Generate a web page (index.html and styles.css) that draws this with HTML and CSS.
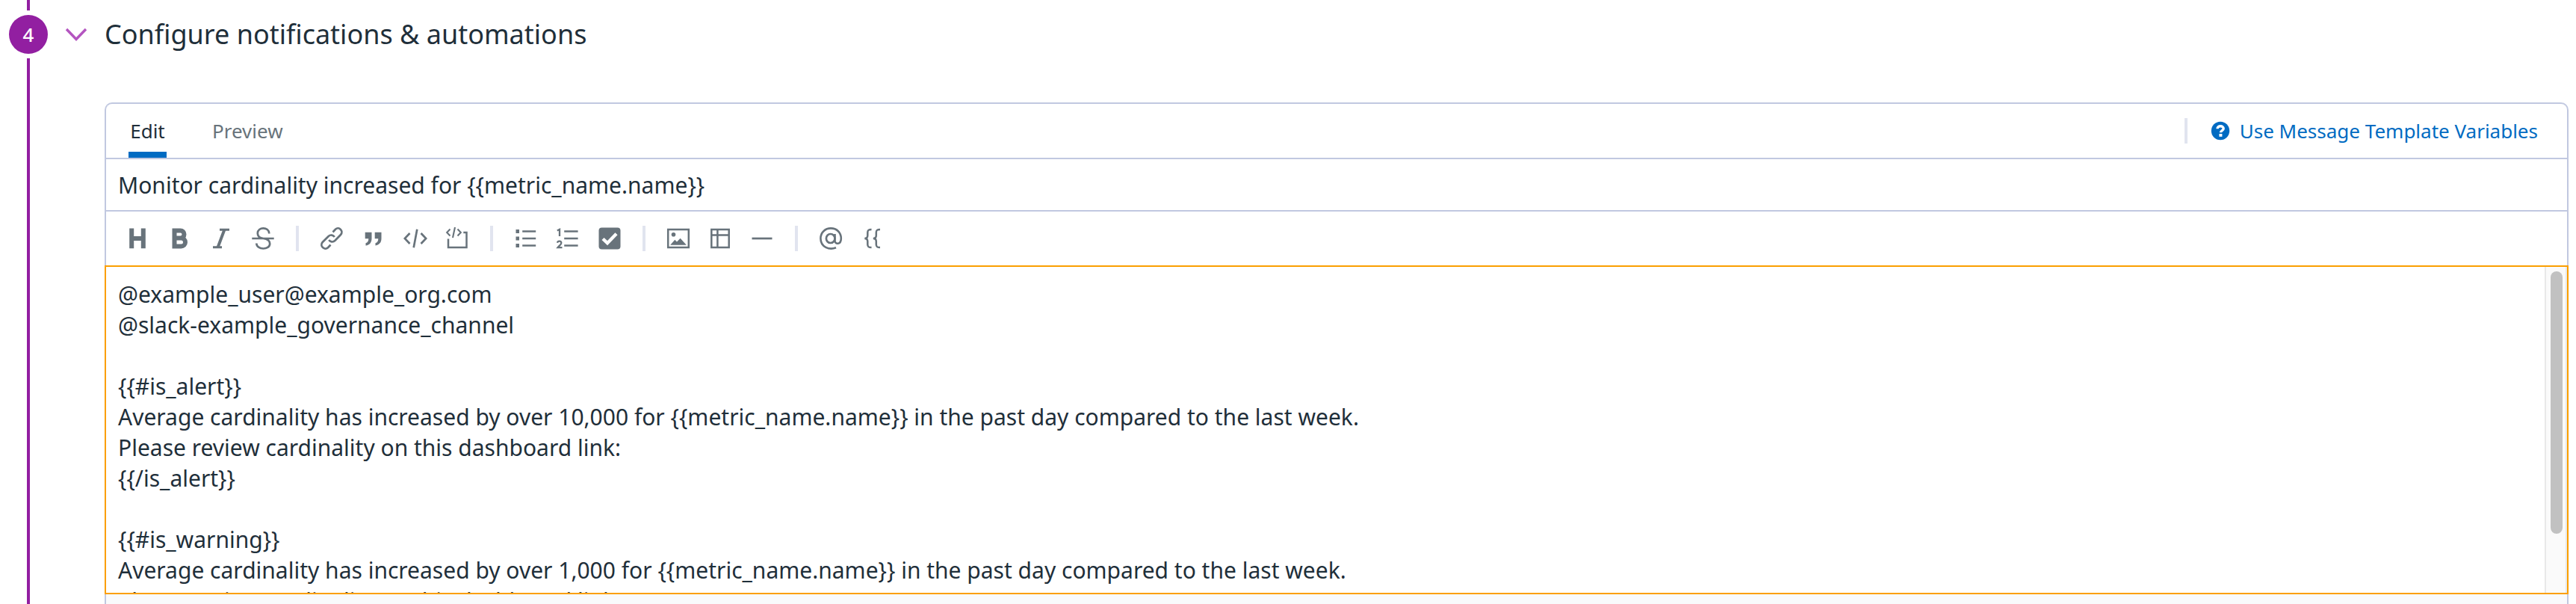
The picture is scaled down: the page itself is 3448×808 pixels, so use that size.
FILE: index.html
```html
<!DOCTYPE html>
<html lang="en">
<head>
<meta charset="utf-8">
<title>Configure notifications &amp; automations</title>
<link rel="stylesheet" href="styles.css">
</head>
<body>
<section class="step">
  <div class="rail">
    <span class="rail-line rail-line-top"></span>
    <span class="step-number">4</span>
    <span class="rail-line rail-line-rest"></span>
  </div>
  <div class="chevron">
    <svg width="32" height="20" viewBox="0 0 32 20"><path d="M3 3 L16 16.5 L29 3" fill="none" stroke="#b455c0" stroke-width="3.4"/></svg>
  </div>
  <div class="content">
    <h2 class="heading">Configure notifications &amp; automations</h2>
    <div class="editor">
      <div class="tabs">
        <div class="tab tab-active">Edit</div>
        <div class="tab tab-preview">Preview</div>
        <div class="help">
          <span class="divider"></span>
          <svg class="help-icon" width="26" height="26" viewBox="0 0 26 26"><circle cx="13" cy="13" r="12.2" fill="#006bc2"/><path d="M9 10.2 C9 5.8 17.2 5.6 17.2 10 C17.2 12.6 13.4 12.6 13.4 15.2" fill="none" stroke="#fff" stroke-width="3.4"/><rect x="11.4" y="17" width="4" height="3.8" fill="#fff"/></svg>
          <span class="help-text">Use Message Template Variables</span>
        </div>
      </div>
      <div class="subject">Monitor cardinality increased for {{metric_name.name}}</div>
      <div class="toolbar">
        <div class="group">
          <svg class="icon" viewBox="0 0 32 32"><path d="M8.2 2.5 V29.3 M23.8 2.5 V29.3 M8 16 H24" stroke-width="6"/></svg>
          <svg class="icon" viewBox="0 0 32 32"><path d="M9.500 5.500 H17.500 A5 5 0 0 1 17.500 15.500 H9.500 Z M9.500 15.500 H18.500 A5.400 5.400 0 0 1 18.500 26.500 H9.500 Z" stroke-width="6"/></svg>
          <svg class="icon" viewBox="0 0 32 32"><path d="M14 4.200 H27 M5 27.800 H17" stroke-width="3"/><path d="M20.500 4 L11.500 28" stroke-width="4"/></svg>
          <svg class="icon" viewBox="0 0 32 32"><path d="M1.300 16 H30.700 M24.300 9.500 C24 0 8.800 0 8.800 9 C8.800 13.500 12 15.500 16.500 16 C22 16.800 25.200 19 25.200 23 C25.200 32 7.300 31.500 7.300 22.500" stroke-width="2.700"/></svg>
        </div>
        <span class="divider"></span>
        <div class="group">
          <svg class="icon" viewBox="0 0 32 32"><g stroke-width="2.700"><path d="M17.500 7.500 L21 3.800 C25.500 -0.500 32.500 6 28 11 L20.500 18.800 C17.500 21.700 14 20.500 12.200 18"/><path d="M14.500 24.500 L11 28.200 C6.500 32.500 -0.700 26 3.700 21 L11.500 13.200 C14.500 10.300 18 11.500 19.800 14"/></g></svg>
          <svg class="icon" viewBox="0 0 32 32"><path class="solid" d="M4.700 7.700 H13.500 V16 C13.500 21.500 10.500 25 5.500 25.500 V22.300 C8 21.600 9.300 19.500 9.300 16.300 H4.700 Z M17.700 7.700 H26.500 V16 C26.500 21.500 23.500 25 18.500 25.500 V22.300 C21 21.600 22.300 19.500 22.300 16.300 H17.700 Z"/></svg>
          <svg class="icon" viewBox="0 0 32 32"><path d="M8.500 9 L1.800 16 L8.500 23 M23.500 9 L30.200 16 L23.500 23 M18.300 3.700 L13.700 28.300" stroke-width="2.700"/></svg>
          <svg class="icon" viewBox="0 0 32 32"><path d="M6.500 3.500 L2.200 8 L6.500 12.500 M16.500 3.500 L20.800 8 L16.500 12.500 M13 1 L10 15" stroke-width="2.100"/><path d="M4 16.500 V28 H28.500 V8 H24.300" stroke-width="2.500"/></svg>
        </div>
        <span class="divider"></span>
        <div class="group">
          <svg class="icon" viewBox="0 0 32 32"><path d="M11.200 6.500 H29.200 M11.200 16 H29.200 M11.200 25.500 H29.200" stroke-width="2.700"/><path class="solid" d="M2.500 4 h4.500 v5 h-4.500z M2.500 13.500 h4.500 v5 h-4.500z M2.500 23 h4.500 v5 h-4.500z"/></svg>
          <svg class="icon" viewBox="0 0 32 32"><path d="M11.200 6.500 H29.600 M11.200 16 H29.600 M11.200 25.500 H29.600" stroke-width="2.700"/><path d="M1.800 5.500 L5 3.800 V13 M2 21.800 C2.600 18.800 7.300 19.200 7.300 22 C7.300 24.200 4.500 25.500 2.500 28.200 H8.500" stroke-width="2.300"/></svg>
          <svg class="icon" viewBox="0 0 32 32"><rect class="solid" x="1.500" y="1.500" width="29" height="29" rx="4"/><path class="tick" d="M7 16.500 L13 22.200 L25 9.800"/></svg>
        </div>
        <span class="divider"></span>
        <div class="group">
          <svg class="icon" viewBox="0 0 32 32"><rect x="2.200" y="4" width="27.600" height="24" stroke-width="2.500"/><circle class="solid" cx="9.500" cy="10.700" r="2.800"/><path class="solid" d="M5.200 24.800 L11.300 17.800 L14 20.500 L18.600 15.800 L26.800 24.800 Z"/></svg>
          <svg class="icon" viewBox="0 0 32 32"><path d="M4.300 4 H27.700 V28 H4.300 Z M4 11.500 H28 M12.400 4 V28" stroke-width="2.500"/></svg>
          <svg class="icon" viewBox="0 0 32 32"><path d="M2.500 16 H29.500" stroke-width="2.700"/></svg>
        </div>
        <span class="divider"></span>
        <div class="group">
          <svg class="icon" viewBox="0 0 32 32"><path d="M23 28.300 C14 32 2.400 27.500 2.400 16 C2.400 8 8.500 2.400 16 2.400 C24 2.400 29.800 8 29.800 16 C29.800 24.500 21.500 24.500 21.500 19 V10" stroke-width="2.600"/><ellipse cx="15.700" cy="16" rx="5.800" ry="6" stroke-width="2.700"/></svg>
          <svg class="icon" viewBox="0 0 32 32"><path d="M14.500 4 C10.500 4 9.300 5 9.300 8 V12 C9.300 15 8 16 5.300 16 C8 16 9.300 17 9.300 20 V24 C9.300 27 10.500 28 14.500 28 M26 4 C22 4 20.800 5 20.800 8 V12 C20.800 15 19.500 16 16.800 16 C19.500 16 20.800 17 20.800 20 V24 C20.800 27 22 28 26 28" stroke-width="2.500"/></svg>
        </div>
      </div>
      <div class="message">
        <div class="message-text">
          <p>@example_user@example_org.com</p>
          <p>@slack-example_governance_channel</p>
          <p></p>
          <p>{{#is_alert}}</p>
          <p>Average cardinality has increased by over 10,000 for {{metric_name.name}} in the past day compared to the last week.</p>
          <p>Please review cardinality on this dashboard link:</p>
          <p>{{/is_alert}}</p>
          <p></p>
          <p>{{#is_warning}}</p>
          <p>Average cardinality has increased by over 1,000 for {{metric_name.name}} in the past day compared to the last week.</p>
          <p>Please review cardinality on this dashboard link:</p>
        </div>
        <div class="scrollbar"><span class="thumb"></span></div>
      </div>
      <div class="footer"></div>
    </div>
  </div>
</section>
</body>
</html>
```
FILE: styles.css
```css
* { box-sizing: border-box; }
body {
  margin: 0;
  width: 3448px;
  height: 808px;
  overflow: hidden;
  background: #fff;
  color: #1f2f3a;
  font-family: "Noto Sans", sans-serif;
}
.step { display: flex; height: 808px; }
.rail {
  width: 76px;
  display: flex;
  flex-direction: column;
  align-items: center;
}
.rail-line { width: 4px; background: #921fa1; }
.rail-line-top { height: 14px; }
.rail-line-rest { flex: 1; }
.step-number {
  width: 52px;
  height: 52px;
  margin: 6px 0;
  border-radius: 50%;
  background: #921fa1;
  color: #fff;
  font-size: 26px;
  font-weight: 500;
  line-height: 52px;
  text-align: center;
}
.chevron { width: 64px; padding: 36px 0 0 10px; }
.chevron svg { display: block; }
.content { width: 3298px; display: flex; flex-direction: column; }
.heading {
  margin: 0;
  height: 137px;
  font-size: 36px;
  font-weight: 400;
  line-height: 92px;
  white-space: nowrap;
}
.editor {
  flex: 1;
  display: flex;
  flex-direction: column;
  border: solid #c1c8e0;
  border-width: 2px 2px 0;
  border-radius: 10px 10px 0 0;
}
.tabs {
  height: 74px;
  display: flex;
  border-bottom: 2px solid #c1c8e0;
  padding-left: 30px;
  font-size: 26px;
  line-height: 72px;
}
.tab { height: 72px; text-align: center; white-space: nowrap; }
.tab-active { width: 51px; border-bottom: 8px solid #006bc2; }
.tab-preview { margin-left: 61px; color: #68737b; }
.help {
  margin-left: auto;
  padding-right: 39px;
  display: flex;
  align-items: center;
  color: #006bc2;
  line-height: 71px;
}
.help-icon { margin: 0 13px 0 31px; }
.divider { width: 4px; height: 34px; background: #e1e4ef; }
.subject {
  height: 70px;
  padding-left: 16px;
  border-bottom: 2px solid #c1c8e0;
  font-size: 30px;
  line-height: 70px;
}
.toolbar {
  height: 72px;
  padding-left: 26px;
  display: flex;
  align-items: center;
  gap: 28px;
}
.group { display: flex; gap: 24px; }
.icon { width: 32px; height: 32px; fill: none; stroke: #68737b; }
.icon .solid { fill: #68737b; stroke: none; }
.icon .tick { stroke: #fff; stroke-width: 4.4; }
.message {
  height: 440px;
  margin: 0 -2px;
  border: 2px solid #fb9f00;
  display: flex;
  overflow: hidden;
}
.message-text {
  flex: 1;
  padding: 16px 0 0 16px;
  font-size: 30px;
  line-height: 41px;
}
.message-text p { margin: 0; height: 41px; white-space: nowrap; }
.scrollbar {
  width: 30px;
  height: 436px;
  padding: 6px 0 0 6px;
  background: #fafafa;
  border: solid #e8e8e8;
  border-width: 0 2px;
}
.thumb {
  display: block;
  width: 16px;
  height: 351px;
  border-radius: 8px;
  background: #c1c1c1;
}
.footer { flex: 1; background: #f9fafc; }
```
